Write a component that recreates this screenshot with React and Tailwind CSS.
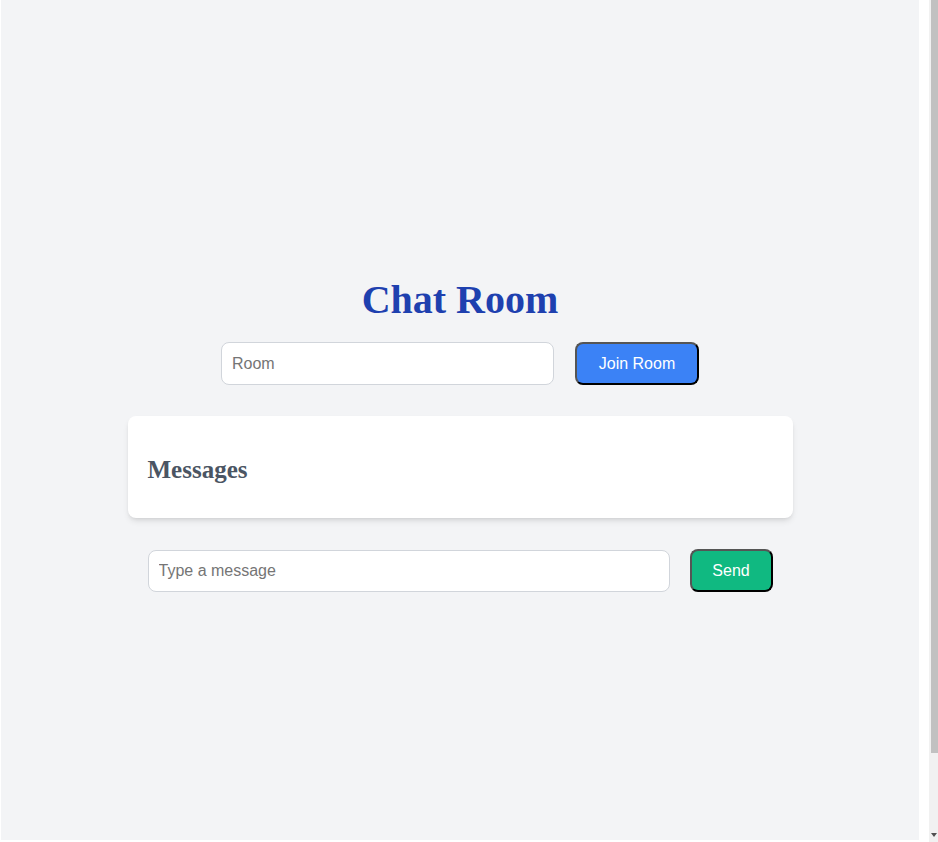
export default function App() {
  return (
    <div className="flex h-[842px] w-[938px] overflow-hidden bg-white">
      <div className="ml-px flex h-[840px] w-[918px] flex-col items-center bg-[#f3f4f6] pt-[276px]">
        <h1 className="mb-[18px] text-[40px] font-bold leading-[48px] text-[#1e40af] [font-family:'Liberation_Serif',serif]">
          Chat Room
        </h1>
        <div className="flex items-center gap-[21px] [font-family:'Liberation_Sans',Arial,sans-serif]">
          <input
            type="text"
            placeholder="Room"
            className="h-[43px] w-[333px] rounded-lg border border-[#d1d5db] bg-white px-[10px] text-base text-gray-900 outline-none placeholder:text-[#757575]"
          />
          <button className="h-[43px] w-[124px] rounded-lg border-2 border-t-[#555] border-l-[#555] border-r-black border-b-black bg-[#3b82f6] text-base text-white">
            Join Room
          </button>
        </div>
        <div className="mt-[31px] h-[102px] w-[665px] rounded-lg bg-white px-5 pt-[38px] shadow-md">
          <h2 className="text-[25px] font-bold leading-8 text-[#4b5563] [font-family:'Liberation_Serif',serif]">
            Messages
          </h2>
        </div>
        <div className="mt-[31px] flex w-[665px] items-center gap-[20px] px-5 [font-family:'Liberation_Sans',Arial,sans-serif]">
          <input
            type="text"
            placeholder="Type a message"
            className="h-[42px] flex-1 rounded-lg border border-[#d1d5db] bg-white px-[10px] text-base text-gray-900 outline-none placeholder:text-[#757575]"
          />
          <button className="h-[43px] w-[83px] rounded-lg border-2 border-t-[#555] border-l-[#555] border-r-black border-b-black bg-[#10b981] text-base text-white">
            Send
          </button>
        </div>
      </div>
      <div className="w-[10px] bg-white" />
      <div className="flex w-[9px] flex-col bg-[#f1f1f1]">
        <div className="ml-[2px] h-[753px] bg-[#c1c1c1]" />
        <div className="flex flex-1 items-end justify-end pb-[5px]">
          <svg width="6" height="4" viewBox="0 0 6 4" className="mr-px">
            <polygon points="0,0 6,0 3,4" fill="#505050" />
          </svg>
        </div>
      </div>
    </div>
  );
}
